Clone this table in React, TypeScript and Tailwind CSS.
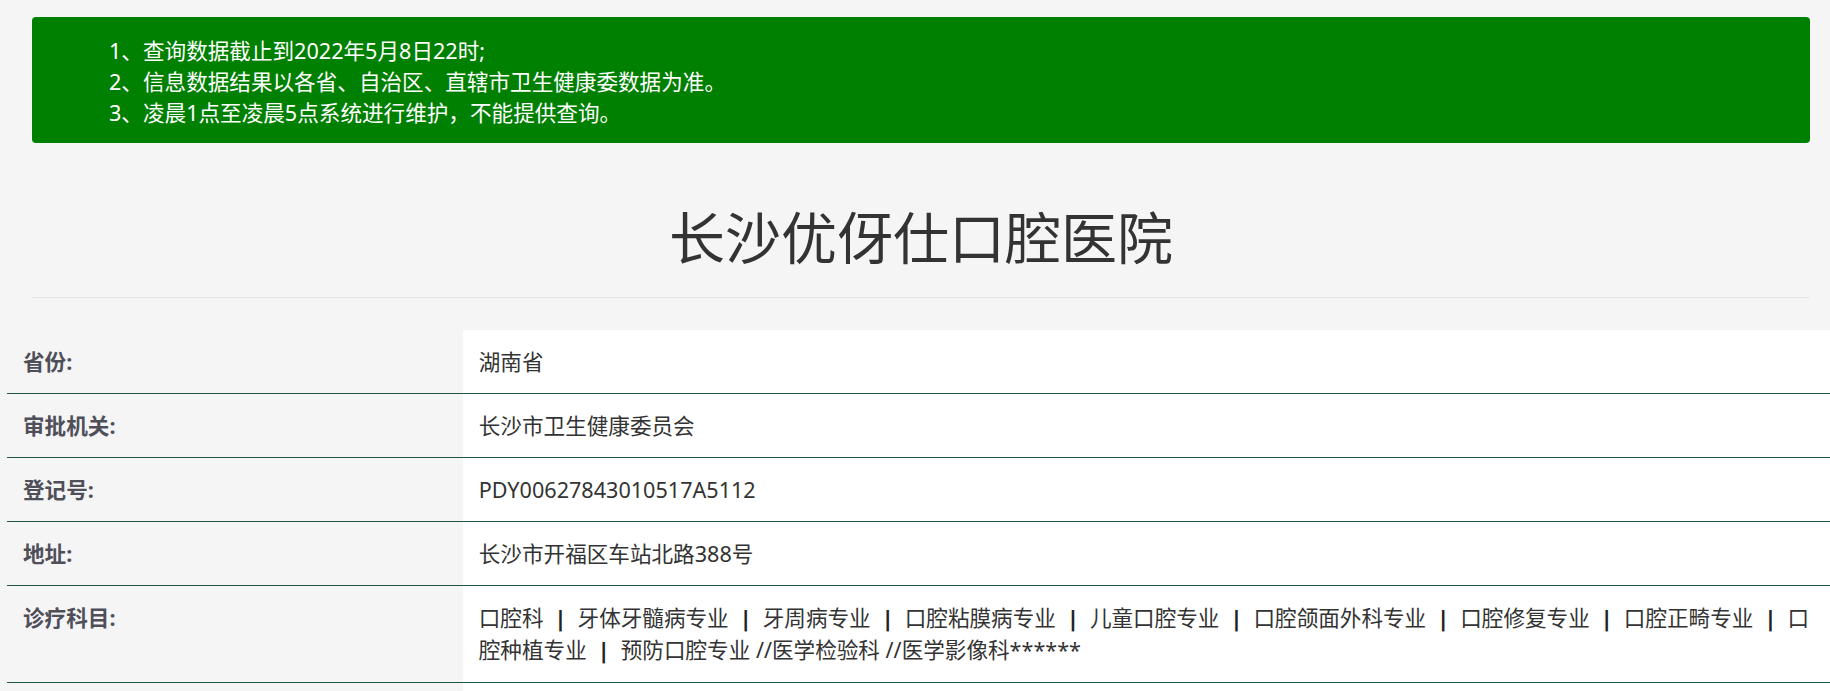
import { Fragment } from "react";

const notices = [
  "1、查询数据截止到2022年5月8日22时;",
  "2、信息数据结果以各省、自治区、直辖市卫生健康委数据为准。",
  "3、凌晨1点至凌晨5点系统进行维护，不能提供查询。",
];

const departments = [
  "口腔科",
  "牙体牙髓病专业",
  "牙周病专业",
  "口腔粘膜病专业",
  "儿童口腔专业",
  "口腔颌面外科专业",
  "口腔修复专业",
  "口腔正畸专业",
  "口腔种植专业",
  "预防口腔专业 //医学检验科 //医学影像科******",
];

function Departments() {
  return (
    <>
      {departments.map((name, i) => (
        <Fragment key={name}>
          {i > 0 && (
            <span className="inline-block w-[34px] text-center font-['DejaVu_Sans'] font-bold text-[#222]">
              |
            </span>
          )}
          {name}
        </Fragment>
      ))}
    </>
  );
}

const rows: Array<{ label: string; value: React.ReactNode }> = [
  { label: "省份:", value: "湖南省" },
  { label: "审批机关:", value: "长沙市卫生健康委员会" },
  { label: "登记号:", value: "PDY00627843010517A5112" },
  { label: "地址:", value: "长沙市开福区车站北路388号" },
  { label: "诊疗科目:", value: <Departments /> },
  { label: "有效期限:", value: "2021年01月01日至2025年12月31日" },
];

export default function App() {
  return (
    <div className="min-h-screen bg-[#f5f5f5] font-['Noto_Sans','Noto_Sans_CJK_SC',sans-serif] text-[#333]">
      <div className="pl-[32px] pr-[20px] pt-[17px]">
        {/* Notice */}
        <div className="rounded-[4px] bg-[#008000] pb-[15px] pl-[77px] pt-[18px] text-[21.6px] leading-[31px] text-white">
          {notices.map((line) => (
            <p key={line}>{line}</p>
          ))}
        </div>

        {/* Title */}
        <h1 className="mt-[63px] text-center text-[56px] font-normal leading-[62px] text-[#333]">
          长沙优伢仕口腔医院
        </h1>
        <hr className="mt-[29px] border-0 border-t border-[#e6e6e6]" />
      </div>

      {/* Detail table */}
      <div className="ml-[7px] mt-[32px] text-[21.6px] leading-[31px]">
        {rows.map((row) => (
          <div key={row.label} className="flex border-b border-[#1f5545]">
            <div className="w-1/4 shrink-0 px-4 py-4 font-bold text-[#4f4f5a]">
              {row.label}
            </div>
            <div className="min-w-0 flex-1 bg-white px-4 py-4 text-[#333]">
              {row.value}
            </div>
          </div>
        ))}
      </div>
    </div>
  );
}
